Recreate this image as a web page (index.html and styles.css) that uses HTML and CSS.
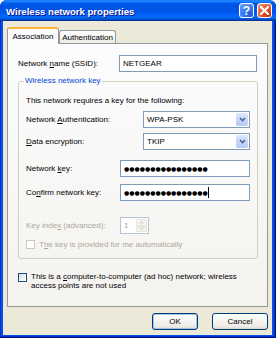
FILE: index.html
```html
<!DOCTYPE html>
<html lang="en">
<head>
    <meta charset="UTF-8">
    <title>Wireless network properties</title>
    <link rel="stylesheet" href="styles.css">
</head>
<body>
    <div class="window">
        <div class="titlebar">
            <span class="title">Wireless network properties</span>
            <div class="title-buttons">
                <span class="tbtn help">?</span>
                <span class="tbtn close">
                    <svg width="9" height="9" viewBox="0 0 9 9"><path d="M1 1 L8 8 M8 1 L1 8" stroke="#fff" stroke-width="2" stroke-linecap="square"/></svg>
                </span>
            </div>
        </div>

        <div class="client">
            <div class="tabs">
                <div class="tab active">Association</div>
                <div class="tab">Authentication</div>
            </div>

            <div class="panel">
                <div class="row ssid-row">
                    <span class="lbl ssid-lbl">Network <u>n</u>ame (SSID):</span>
                    <div class="field ssid-field">NETGEAR</div>
                </div>

                <fieldset class="group">
                    <legend>Wireless network key</legend>
                    <p class="intro">This network requires a key for the following:</p>

                    <div class="row combo-row">
                        <span class="lbl combo-lbl">Network <u>A</u>uthentication:</span>
                        <div class="combo">
                            <span>WPA-PSK</span>
                            <span class="combo-btn"><svg width="7" height="5" viewBox="0 0 7 5"><path d="M1 1 L3.5 3.5 L6 1" fill="none" stroke="#4D6185" stroke-width="1.6"/></svg></span>
                        </div>
                    </div>
                    <div class="row combo-row second">
                        <span class="lbl combo-lbl"><u>D</u>ata encryption:</span>
                        <div class="combo">
                            <span>TKIP</span>
                            <span class="combo-btn"><svg width="7" height="5" viewBox="0 0 7 5"><path d="M1 1 L3.5 3.5 L6 1" fill="none" stroke="#4D6185" stroke-width="1.6"/></svg></span>
                        </div>
                    </div>

                    <div class="row key-row">
                        <span class="lbl key-lbl">Network <u>k</u>ey:</span>
                        <div class="field key-field"><span class="dots">●●●●●●●●●●●●●●●●</span></div>
                    </div>
                    <div class="row key-row second">
                        <span class="lbl key-lbl">Co<u>n</u>firm network key:</span>
                        <div class="field key-field"><span class="dots">●●●●●●●●●●●●●●●●</span><span class="caret"></span></div>
                    </div>

                    <div class="row index-row">
                        <span class="lbl key-lbl disabled">Key inde<u>x</u> (advanced):</span>
                        <div class="spin">
                            <span class="spin-value">1</span>
                            <span class="spin-btns">
                                <span class="spin-btn"><svg width="5" height="3" viewBox="0 0 5 3"><path d="M0.5 2.5 L2.5 0.7 L4.5 2.5" fill="none" stroke="#C2C7D0" stroke-width="1"/></svg></span>
                                <span class="spin-btn"><svg width="5" height="3" viewBox="0 0 5 3"><path d="M0.5 0.5 L2.5 2.3 L4.5 0.5" fill="none" stroke="#C2C7D0" stroke-width="1"/></svg></span>
                            </span>
                        </div>
                    </div>

                    <div class="row check-row">
                        <span class="check disabled-check"></span>
                        <span class="disabled">T<u>h</u>e key is provided for me automatically</span>
                    </div>
                </fieldset>

                <div class="adhoc">
                    <span class="check"></span>
                    <span class="adhoc-text">This is a <u>c</u>omputer-to-computer (ad hoc) network; wireless<br>access points are not used</span>
                </div>
            </div>

            <div class="actions">
                <button class="btn default">OK</button>
                <button class="btn cancel">Cancel</button>
            </div>
        </div>
    </div>
</body>
</html>
```

FILE: styles.css
```css
* {
    margin: 0;
    padding: 0;
    box-sizing: border-box;
}

body {
    width: 276px;
    height: 338px;
    overflow: hidden;
    background: #fff;
    font-family: "Liberation Sans", Arial, sans-serif;
    font-size: 8px;
    color: #000;
}

u {
    text-decoration: underline;
    text-underline-offset: 1px;
}

.window {
    width: 276px;
    height: 338px;
    display: flex;
    flex-direction: column;
    background: #0A4FE3;
    border-radius: 7px 7px 0 0;
    box-shadow: inset -1px -1px #00138C, inset 1px 0 #0831D9, inset -2px -2px #0032C8;
}

/* title bar */
.titlebar {
    height: 21px;
    display: flex;
    align-items: center;
    justify-content: space-between;
    padding: 0 4px 0 6px;
    border-radius: 7px 7px 0 0;
    background: linear-gradient(180deg, #0058EE 0%, #3593FF 4%, #288EFF 6%, #127DFF 8%, #036FFC 10%, #0262EE 14%, #0057E5 20%, #0054E3 24%, #0055EB 56%, #005BF5 66%, #026AFE 76%, #0062EF 86%, #0052D6 92%, #0040AB 94%, #003092 100%);
}

.title {
    color: #fff;
    font-weight: bold;
    font-size: 9.6px;
    text-shadow: 1px 1px #0F1089;
    padding-top: 1px;
}

.title-buttons {
    display: flex;
    gap: 3px;
}

.tbtn {
    width: 15px;
    height: 15px;
    border: 1px solid #fff;
    border-radius: 3px;
    display: flex;
    align-items: center;
    justify-content: center;
    color: #fff;
}

.help {
    background: radial-gradient(circle at 80% 85%, #2559CF 0%, #3C7FF5 55%, #72A4FA 100%);
    font-weight: bold;
    font-size: 12px;
    line-height: 1;
}

.close {
    background: radial-gradient(circle at 80% 85%, #C23514 0%, #E45E33 55%, #F0A58A 100%);
}

/* client area */
.client {
    flex: 1;
    margin: 0 4px 3px 3px;
    background: #ECE9D8;
    display: flex;
    flex-direction: column;
    padding: 0 4px 0 4px;
}

.tabs {
    height: 22px;
    display: flex;
    align-items: flex-end;
}

.tab {
    height: 13px;
    width: 57px;
    border: 1px solid #919B9C;
    border-bottom: none;
    border-radius: 3px 3px 0 0;
    background: linear-gradient(180deg, #FFFFFF, #ECEBE6);
    display: flex;
    align-items: center;
    justify-content: center;
}

.tab.active {
    height: 17px;
    width: 52px;
    margin-bottom: -1px;
    position: relative;
    z-index: 1;
    background: #FCFCFE;
    border-top: 2px solid #F7B63A;
    padding-bottom: 1px;
}

.panel {
    height: 264px;
    border: 1px solid #919B9C;
    background: linear-gradient(180deg, #FCFCFE, #F4F3EE);
    padding: 11px 10px 0 10px;
}

.row {
    display: flex;
    align-items: center;
}

.lbl {
    flex-shrink: 0;
}

.ssid-lbl {
    width: 101px;
}

.field {
    height: 17px;
    border: 1px solid #7F9DB9;
    background: #fff;
    display: flex;
    align-items: center;
    padding-left: 3px;
}

.ssid-field {
    width: 139px;
}

/* group box */
.group {
    margin-top: 4px;
    width: 239px;
    height: 183px;
    border: 1px solid #D0D0BF;
    border-radius: 3px;
    padding: 0 7px;
}

.group legend {
    color: #0046D5;
    line-height: 10px;
    padding: 0 1px;
    margin-left: -2px;
}

.intro {
    margin-top: 10px;
    line-height: 10px;
}

.combo-row {
    margin-top: 5px;
}

.combo-lbl {
    width: 117px;
}

.combo {
    width: 107px;
    height: 17px;
    border: 1px solid #7F9DB9;
    background: #fff;
    display: flex;
    align-items: center;
    padding: 1px 1px 1px 3px;
}

.combo-btn {
    margin-left: auto;
    width: 12px;
    height: 100%;
    border-radius: 2px;
    background: linear-gradient(180deg, #DCE6FD, #B4CAF8);
    display: flex;
    align-items: center;
    justify-content: center;
}

.key-row {
    margin-top: 10px;
}

.key-row.second {
    margin-top: 7px;
}

.key-lbl {
    width: 94px;
}

.key-field {
    width: 130px;
}

.dots {
    font-family: "DejaVu Sans", sans-serif;
    font-size: 6px;
    letter-spacing: 0;
}

.caret {
    width: 1px;
    height: 11px;
    background: #000;
}

.index-row {
    margin-top: 16px;
}

.disabled {
    color: #ACA899;
}

.spin {
    width: 29px;
    height: 17px;
    border: 1px solid #B5C3D6;
    background: #fff;
    display: flex;
    align-items: center;
    padding: 1px 1px 1px 3px;
}

.spin-value {
    color: #ACA899;
}

.spin-btns {
    margin-left: auto;
    width: 11px;
    height: 100%;
    display: flex;
    flex-direction: column;
}

.spin-btn {
    flex: 1;
    background: #F4F3EE;
    border: 1px solid #E6E5DE;
    border-radius: 1px;
    display: flex;
    align-items: center;
    justify-content: center;
}

.check-row {
    margin-top: 6px;
    gap: 4px;
}

.check {
    width: 9px;
    height: 9px;
    border: 1px solid #1C5180;
    background: linear-gradient(135deg, #DCDCD7, #FFFFFF);
    flex-shrink: 0;
}

.disabled-check {
    border-color: #CAC8BB;
    background: #fff;
}

.adhoc {
    margin-top: 13px;
    display: flex;
    gap: 4px;
    align-items: flex-start;
}

.adhoc .check {
    margin-top: 1px;
}

.adhoc-text {
    line-height: 9px;
}

/* dialog buttons */
.actions {
    display: flex;
    justify-content: flex-end;
    gap: 14px;
    margin-top: 6px;
}

.btn {
    height: 17px;
    border: 1px solid #003C74;
    border-radius: 3px;
    background: linear-gradient(180deg, #FFFFFF, #ECEBE6 86%, #D6D0C5);
    font-family: "Liberation Sans", Arial, sans-serif;
    font-size: 8px;
    color: #000;
}

.btn.default {
    width: 46px;
    box-shadow: inset 0 0 0 1px #A8C4EE;
}

.btn.cancel {
    width: 56px;
}
```
